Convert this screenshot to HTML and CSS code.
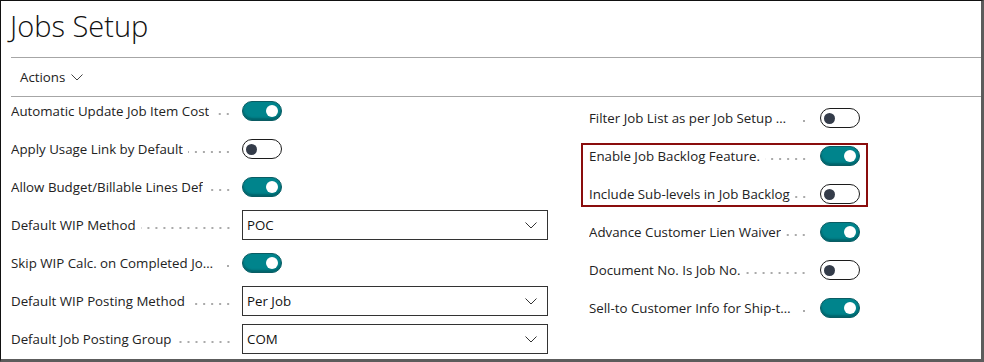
FILE: index.html
```html
<!DOCTYPE html>
<html lang="en">
<head>
  <meta charset="UTF-8">
  <title>Jobs Setup</title>
  <link rel="stylesheet" href="styles.css">
</head>
<body>
  <div class="page">
    <!-- page title -->
    <h1 class="page-title">Jobs Setup</h1>

    <!-- action bar -->
    <div class="action-bar">
      <span class="actions">Actions
        <svg class="chev" width="12" height="7" viewBox="0 0 12 7"><polyline points="0.5,0.5 6,6 11.5,0.5" fill="none" stroke="#444" stroke-width="1"/></svg>
      </span>
    </div>

    <!-- fields -->
    <div class="fields">
      <div class="col col-left">
        <div class="field">
          <span class="caption"><span class="label">Automatic Update Job Item Cost</span><span class="leader"></span></span>
          <span class="toggle on"></span>
        </div>
        <div class="field">
          <span class="caption"><span class="label">Apply Usage Link by Default</span><span class="leader"></span></span>
          <span class="toggle"></span>
        </div>
        <div class="field">
          <span class="caption"><span class="label">Allow Budget/Billable Lines Def</span><span class="leader"></span></span>
          <span class="toggle on"></span>
        </div>
        <div class="field">
          <span class="caption"><span class="label">Default WIP Method</span><span class="leader"></span></span>
          <span class="select">POC<svg class="chev" width="12" height="7" viewBox="0 0 12 7"><polyline points="0.5,0.5 6,6 11.5,0.5" fill="none" stroke="#333" stroke-width="1"/></svg></span>
        </div>
        <div class="field">
          <span class="caption"><span class="label">Skip WIP Calc. on Completed Job Tasks</span><span class="leader"></span></span>
          <span class="toggle on"></span>
        </div>
        <div class="field">
          <span class="caption"><span class="label">Default WIP Posting Method</span><span class="leader"></span></span>
          <span class="select">Per Job<svg class="chev" width="12" height="7" viewBox="0 0 12 7"><polyline points="0.5,0.5 6,6 11.5,0.5" fill="none" stroke="#333" stroke-width="1"/></svg></span>
        </div>
        <div class="field">
          <span class="caption"><span class="label">Default Job Posting Group</span><span class="leader"></span></span>
          <span class="select">COM<svg class="chev" width="12" height="7" viewBox="0 0 12 7"><polyline points="0.5,0.5 6,6 11.5,0.5" fill="none" stroke="#333" stroke-width="1"/></svg></span>
        </div>
      </div>

      <div class="col col-right">
        <div class="field">
          <span class="caption"><span class="label">Filter Job List as per Job Setup Defaults</span><span class="leader"></span></span>
          <span class="toggle"></span>
        </div>
        <div class="highlight">
          <div class="field">
            <span class="caption"><span class="label">Enable Job Backlog Feature.</span><span class="leader"></span></span>
            <span class="toggle on"></span>
          </div>
          <div class="field">
            <span class="caption"><span class="label">Include Sub-levels in Job Backlog</span><span class="leader"></span></span>
            <span class="toggle"></span>
          </div>
        </div>
        <div class="field">
          <span class="caption"><span class="label">Advance Customer Lien Waiver</span><span class="leader"></span></span>
          <span class="toggle on"></span>
        </div>
        <div class="field">
          <span class="caption"><span class="label">Document No. Is Job No.</span><span class="leader"></span></span>
          <span class="toggle"></span>
        </div>
        <div class="field">
          <span class="caption"><span class="label">Sell-to Customer Info for Ship-to Address</span><span class="leader"></span></span>
          <span class="toggle on"></span>
        </div>
      </div>
    </div>
  </div>
</body>
</html>
```

FILE: styles.css
```css
body {
  margin: 0;
  font-family: "Open Sans", "Noto Sans", sans-serif;
  color: #222;
  background: #fff;
}
.page {
  box-sizing: border-box;
  width: 984px;
  height: 362px;
  border-left: 1px solid #111;
  border-top: 1px solid #111;
  border-right: 3px solid #5c5c5c;
  border-bottom: 3px solid #5c5c5c;
}
/* title */
.page-title {
  margin: 0;
  height: 56px;
  padding-left: 9px;
  font-size: 29px;
  font-weight: 300;
  line-height: 49px;
  color: #111;
}
/* action bar */
.action-bar {
  margin-left: 10px;
  height: 38px;
  border-top: 1px solid #a6a6a6;
  border-bottom: 1px solid #a6a6a6;
  display: flex;
  align-items: center;
  padding-left: 9px;
}
.actions {
  font-size: 13.3px;
  display: flex;
  align-items: center;
  gap: 6px;
}
/* field grid */
.fields {
  display: grid;
  grid-template-columns: 537px 287px;
  column-gap: 33px;
  padding-left: 10px;
}
.col {
  display: flex;
  flex-direction: column;
  gap: 8px;
}
.col-left {
  margin-top: -1px;
}
.col-right {
  padding-top: 6px;
  padding-left: 8px;
}
.field {
  height: 30px;
  display: flex;
  align-items: center;
  font-size: 13.3px;
}
.caption {
  width: 231px;
  flex: none;
  display: flex;
  align-items: center;
}
.col-left .label {
  max-width: 210px;
}
.col-right .label {
  max-width: 206px;
}
.label {
  white-space: nowrap;
  overflow: hidden;
  text-overflow: ellipsis;
}
.col-left .leader {
  margin-right: 10px;
}
.col-right .leader {
  margin-right: 12px;
}
.leader {
  flex: 1;
  min-width: 8px;
  height: 4px;
  margin-left: 5px;
  margin-top: 5px;
  background-image: radial-gradient(circle, #aaa 0.9px, transparent 1.1px);
  background-size: 8px 4px;
  background-repeat: repeat-x;
  background-position: right center;
}
/* toggle switch */
.toggle {
  box-sizing: border-box;
  flex: none;
  width: 40px;
  height: 20px;
  border-radius: 10px;
  border: 1.5px solid #1c1c1c;
  background: #fff;
  display: flex;
  align-items: center;
  padding: 0 3px;
}
.toggle::before {
  content: "";
  width: 11px;
  height: 11px;
  border-radius: 50%;
  background: #343c4a;
}
.toggle.on {
  background: #00848c;
  border-color: #0b5c63;
  justify-content: flex-end;
  box-shadow: inset 0 -2px 2px rgba(0, 40, 45, 0.35);
}
.toggle.on::before {
  width: 12px;
  height: 12px;
  background: #fff;
}
/* dropdown */
.select {
  box-sizing: border-box;
  flex: none;
  width: 306px;
  height: 30px;
  border: 1px solid #333;
  display: flex;
  align-items: center;
  justify-content: space-between;
  padding: 0 10px 0 4px;
  font-size: 13.3px;
  color: #111;
}
/* red annotation box */
.highlight {
  position: relative;
  display: flex;
  flex-direction: column;
  gap: 8px;
}
.highlight::after {
  content: "";
  position: absolute;
  left: -8px;
  top: 2px;
  width: 287px;
  height: 64px;
  box-sizing: border-box;
  border: 2px solid #8a0d0d;
  pointer-events: none;
}
```
